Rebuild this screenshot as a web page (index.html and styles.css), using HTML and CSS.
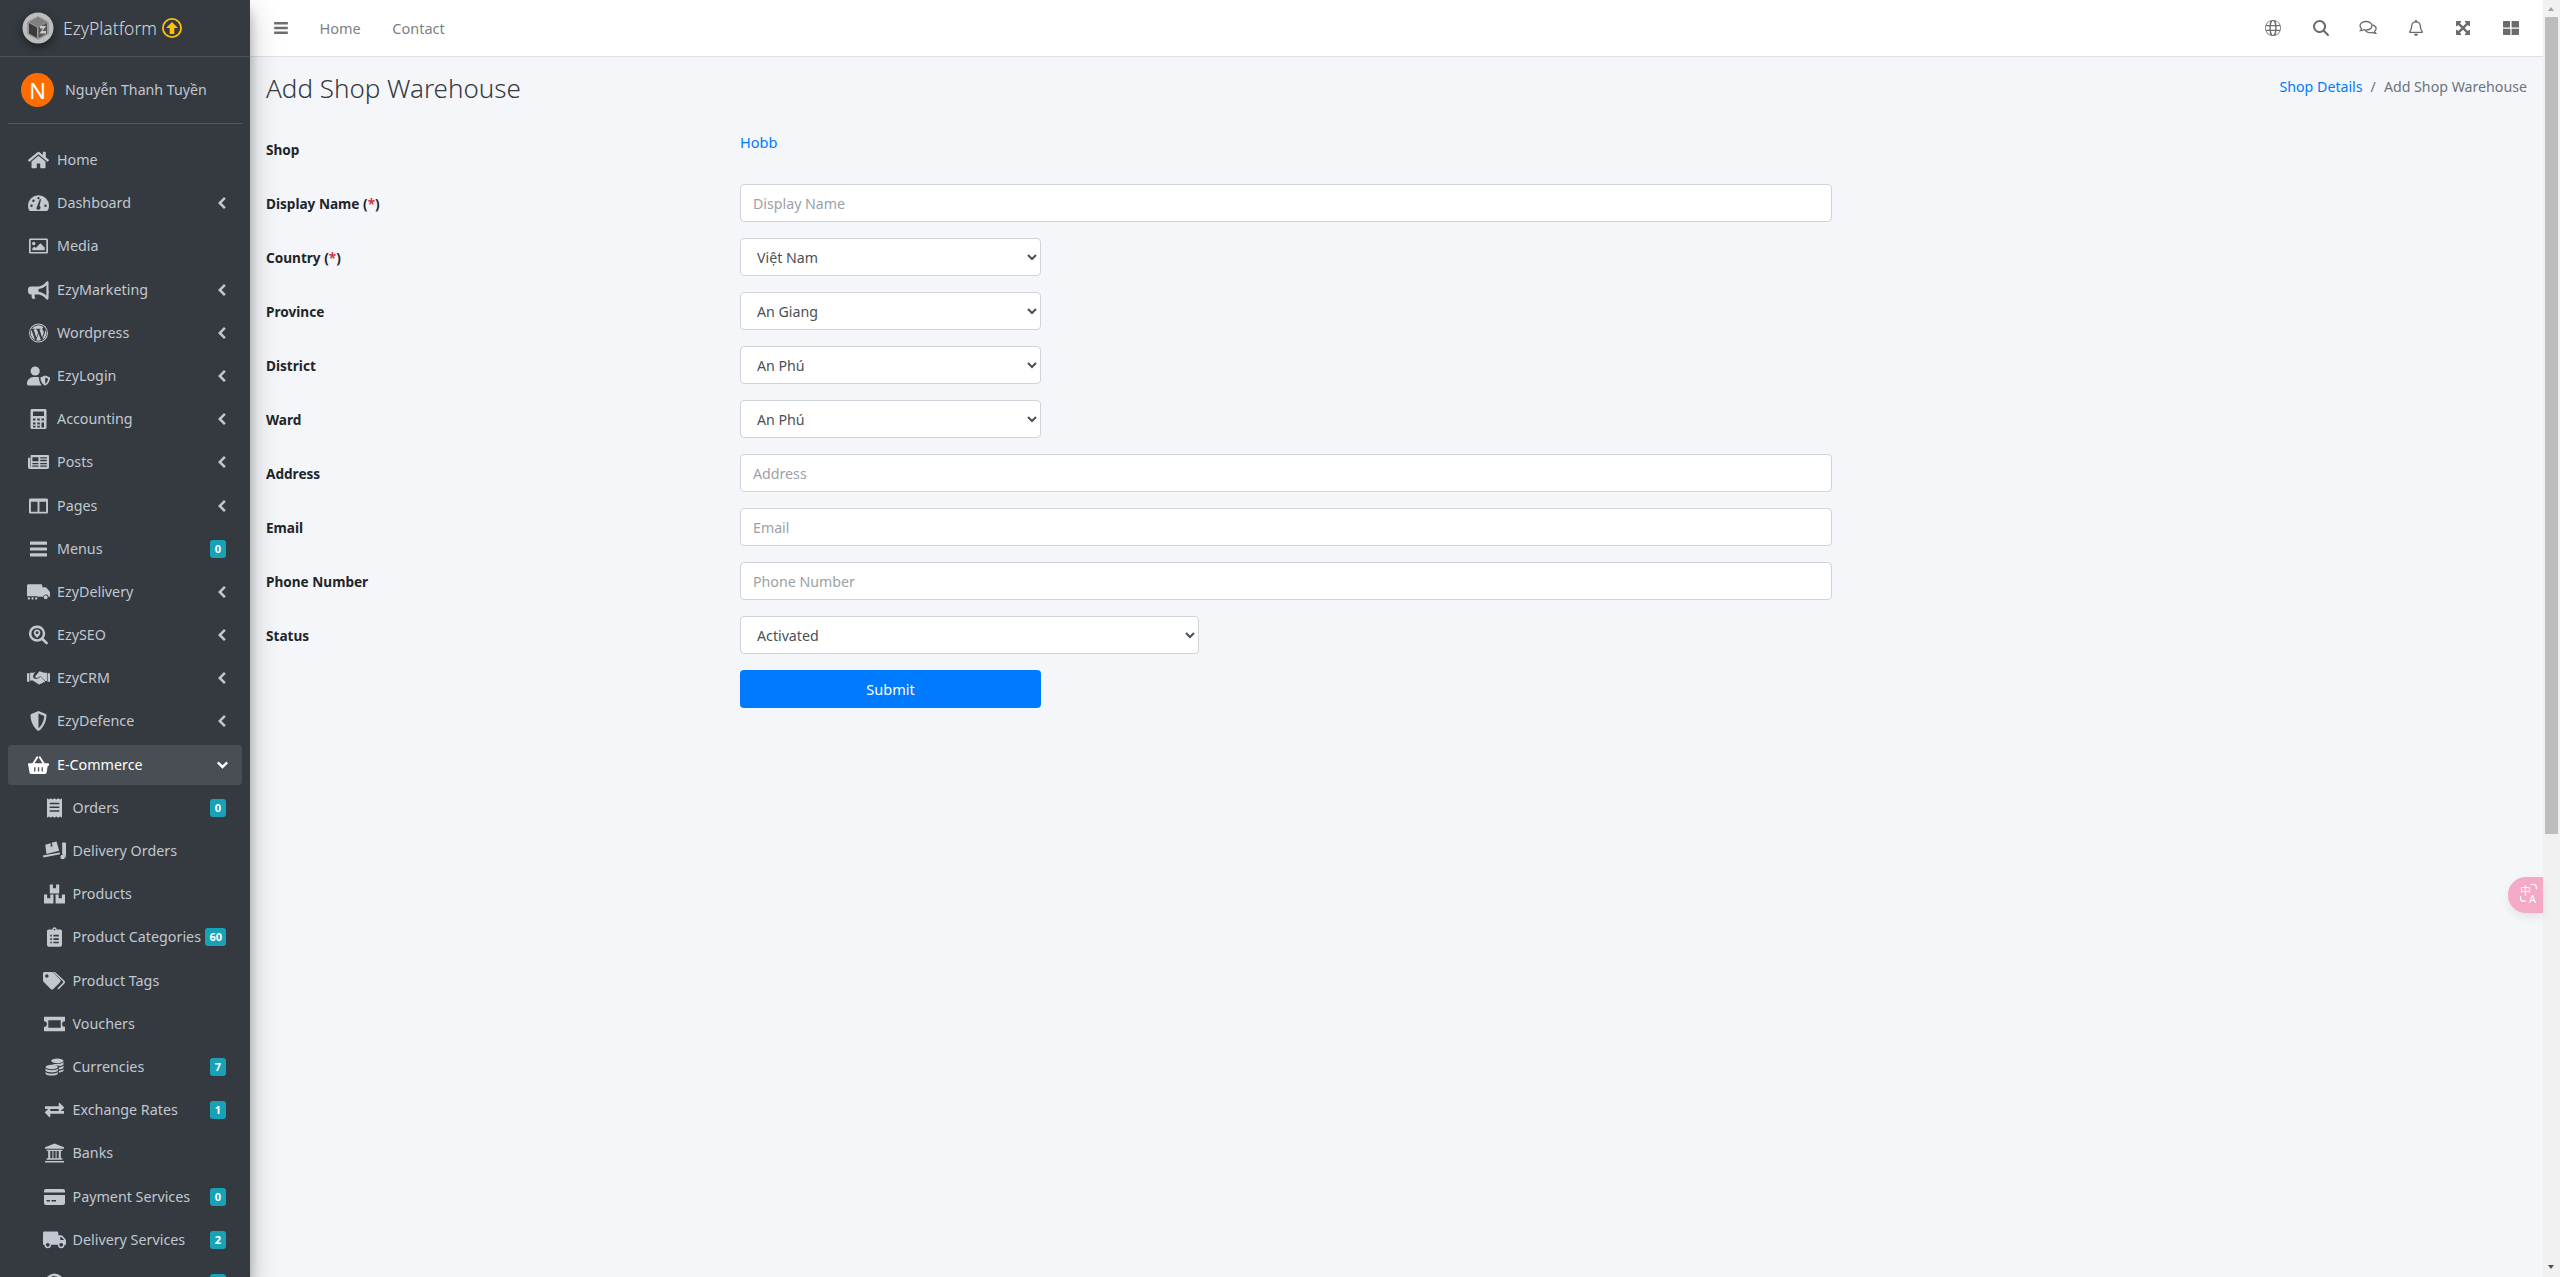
FILE: index.html
```html
<!DOCTYPE html>
<html lang="vi">
<head>
<meta charset="utf-8">
<title>Add Shop Warehouse</title>
<link rel="stylesheet" href="styles.css">
</head>
<body>
<svg class="defs" width="0" height="0">
<defs>
<symbol id="i-home" viewBox="0 0 576 512"><path d="M280.37 148.26L96 300.11V464a16 16 0 0 0 16 16l112.06-.29a16 16 0 0 0 15.92-16V368a16 16 0 0 1 16-16h64a16 16 0 0 1 16 16v95.64a16 16 0 0 0 16 16.05L464 480a16 16 0 0 0 16-16V300L295.67 148.26a12.19 12.19 0 0 0-15.3 0zM571.6 251.47L488 182.56V44.05a12 12 0 0 0-12-12h-56a12 12 0 0 0-12 12v72.61L318.47 43a48 48 0 0 0-61 0L4.34 251.47a12 12 0 0 0-1.6 16.9l25.5 31A12 12 0 0 0 45.15 301l235.22-193.74a12.19 12.19 0 0 1 15.3 0L530.9 301a12 12 0 0 0 16.9-1.6l25.5-31a12 12 0 0 0-1.7-16.93z"/></symbol>
<symbol id="i-gauge" viewBox="0 0 24 20"><path fill-rule="evenodd" d="M12 1a12 12 0 0 0-12 12c0 2 .5 4 1.500 5.500.3.400.7.500 1.100.500h18.800c.4 0 .8-.1 1.100-.5C23.500 17 24 15 24 13A12 12 0 0 0 12 1zM12 3.200a1.300 1.300 0 1 1 0 2.600 1.300 1.300 0 0 1 0-2.600zM4 14.500a1.400 1.400 0 1 1 0-2.800 1.400 1.400 0 0 1 0 2.800zM6.200 8.800a1.400 1.400 0 1 1 0-2.800 1.400 1.400 0 0 1 0 2.800zM20 14.500a1.400 1.400 0 1 1 0-2.800 1.400 1.400 0 0 1 0 2.800zM14.300 15.200a2.500 2.500 0 0 1-4.800 1l4-10.400c.2-.6 1.500-.2 1.300.4l-1.600 7c.7.400 1.100 1.100 1.100 2z"/></symbol>
<symbol id="i-image" viewBox="0 0 20 16"><path fill-rule="evenodd" d="M1.500 0h17c.8 0 1.500.7 1.500 1.500v13c0 .8-.7 1.500-1.500 1.500h-17C.7 16 0 15.300 0 14.500v-13C0 .7.700 0 1.500 0zM1.800 1.800v12.400h16.400V1.800zM5 3.500a1.800 1.800 0 1 1 0 3.600 1.800 1.800 0 0 1 0-3.600zM3.500 12.500v-2l2-2 1.500 1.500 5-5 4.500 4.500v3z"/></symbol>
<symbol id="i-bullhorn" viewBox="0 0 24 20"><path d="M22 0c-.6 0-1 .3-1.300.8C19 3 15.500 6 11 6H3C1.300 6 0 7.300 0 9v3c0 1.700 1.300 3 3 3h1.100c-.2 1.500 0 3.300.8 5h3.600c-.8-1.500-1.100-3.400-.8-5H11c4.500 0 8 3 9.700 5.200.3.500.7.800 1.300.8.800 0 1.500-.6 1.500-1.500v-6.400c.3-.3.500-.8.500-1.100 0-.500-.2-.900-.5-1.100V1.500C23.500.6 22.800 0 22 0zM21 16.500c-2-2-5-4-9-4.400V8.900c4-.4 7-2.400 9-4.400z"/></symbol>
<symbol id="i-wp" viewBox="0 0 20 20"><path fill-rule="evenodd" d="M10 0a10 10 0 1 0 0 20 10 10 0 0 0 0-20zM10 1a9 9 0 1 1 0 18 9 9 0 0 1 0-18zM1.800 10c0 3.200 1.900 6 4.600 7.400L2.500 6.700A8.200 8.200 0 0 0 1.800 10zM15.500 9.600c0-1-.4-1.700-.7-2.200-.4-.7-.8-1.200-.8-1.900 0-.7.500-1.400 1.300-1.400h.1A8.200 8.200 0 0 0 3.100 5.600h.5c.9 0 2.200-.1 2.200-.1.400 0 .5.600 0 .7l-.9.1 2.900 8.700 1.800-5.300-1.300-3.400-.8-.1c-.5 0-.4-.7 0-.7 0 0 1.400.1 2.200.1.900 0 2.200-.1 2.200-.1.500 0 .5.700 0 .7l-.9.1 2.900 8.600.8-2.700c.4-1.100.7-1.800.7-2.500zM10.100 10.600l-2.500 7.100a8.200 8.200 0 0 0 5-.1zM17.200 6c.1.300.1.600.1.900 0 .8-.2 1.800-.7 3l-2.500 7.300A8.200 8.200 0 0 0 17.200 6z"/></symbol>
<symbol id="i-usershield" viewBox="0 0 24 20"><circle cx="8.500" cy="4.800" r="4.800"/><path d="M0 18c0-3.800 3-7 6.800-7h3.500c.8 0 1.500.1 2.200.4-.1 3 .7 6 2.800 8.600H2c-1.100 0-2-.9-2-2z"/><path d="M19 9.500l4.600 1.800c.3.100.4.400.4.600 0 3-1.300 6.500-4.700 8-.2.100-.4.100-.6 0-3.400-1.500-4.700-5-4.700-8 0-.2.200-.5.400-.6zM19 11.600v6.500c2-1 2.900-3.500 3-5.200z" fill-rule="evenodd"/></symbol>
<symbol id="i-calc" viewBox="0 0 16 20"><path fill-rule="evenodd" d="M1.500 0h13c.8 0 1.500.7 1.500 1.500v17c0 .8-.7 1.500-1.500 1.500h-13C.7 20 0 19.300 0 18.500v-17C0 .7.700 0 1.500 0zM2.500 2.500v4.500h11V2.500zM2.500 9.500v2h2.500v-2zM6.800 9.500v2h2.500v-2zM11 9.500v2h2.500v-2zM2.500 13.500v2h2.500v-2zM6.800 13.500v2h2.500v-2zM11 13.500v5h2.500v-5zM2.500 16.800v1.700h2.500v-1.700zM6.800 16.800v1.700h2.500v-1.700z"/></symbol>
<symbol id="i-news" viewBox="0 0 24 16"><path fill-rule="evenodd" d="M3 0h20c.6 0 1 .4 1 1v13c0 1.100-.9 2-2 2H2c-1.100 0-2-.9-2-2V3h2.500v10.500c0 .3.500.3.500 0zM5 2.500v4.500h7V2.500zM14 2.500v1.500h7.500V2.500zM14 5.500V7h7.500V5.500zM5 9v1.500h7V9zM14 9v1.500h7.500V9zM5 12v1.500h7V12zM14 12v1.500h7.500V12z"/></symbol>
<symbol id="i-columns" viewBox="0 0 20 16"><path fill-rule="evenodd" d="M1.500 0h17c.8 0 1.500.7 1.500 1.500v13c0 .8-.7 1.500-1.500 1.500h-17C.7 16 0 15.300 0 14.500v-13C0 .7.700 0 1.500 0zM2 3.500v10.500h7V3.500zM11 3.500v10.500h7V3.500z"/></symbol>
<symbol id="i-bars" viewBox="0 0 16 14"><path d="M.5 0h15c.3 0 .5.200.5.500v2c0 .3-.2.500-.5.500H.5C.2 3 0 2.800 0 2.500v-2C0 .2.200 0 .5 0zM.5 5.500h15c.3 0 .5.200.5.500v2c0 .3-.2.500-.5.500H.5C.2 8.500 0 8.300 0 8V6c0-.3.200-.5.500-.5zM.5 11h15c.3 0 .5.200.5.500v2c0 .3-.2.500-.5.500H.5c-.3 0-.5-.2-.5-.500v-2c0-.3.200-.5.500-.5z"/></symbol>
<symbol id="i-truck" viewBox="0 0 24 18"><path fill-rule="evenodd" d="M1.500 0h13C15.300 0 16 .7 16 1.500V4h3c.5 0 1 .2 1.300.6l3.100 3.700c.4.400.6.900.6 1.400V14h-1.500a3.500 3.500 0 0 1-7 0H8.500a3.500 3.500 0 0 1-7 0H0V1.500C0 .7.700 0 1.500 0zM18 6v3h4l-2.500-3zM5 12a2 2 0 1 1 0 4 2 2 0 0 1 0-4zM19 12a2 2 0 1 1 0 4 2 2 0 0 1 0-4z"/></symbol>
<symbol id="i-truckdots" viewBox="0 0 24 16"><path d="M1.500 0h13C15.300 0 16 .7 16 1.500V3h3c.5 0 1 .2 1.300.6l3.100 3.700c.4.400.6.900.6 1.400V13h-1.500a2.800 2.800 0 0 0-5.500 0h-6v-.5H0V1.500C0 .7.700 0 1.500 0z"/><circle cx="19.500" cy="13.500" r="2"/><circle cx="2" cy="14.800" r="1.200"/><circle cx="5.800" cy="14.800" r="1.200"/><circle cx="9.600" cy="14.800" r="1.200"/></symbol>
<symbol id="i-searchloc" viewBox="0 0 20 20"><path fill-rule="evenodd" d="M8.500 0a8.500 8.500 0 0 1 6.900 13.400l4.200 4.200c.5.500.5 1.200 0 1.700l-.3.300c-.5.500-1.200.5-1.700 0l-4.200-4.200A8.500 8.500 0 1 1 8.500 0zM8.500 2.500a6 6 0 1 0 0 12 6 6 0 0 0 0-12zM8.500 4.200c2 0 3.500 1.500 3.500 3.300 0 2-2.500 4.600-3.500 5.500C7.500 12.100 5 9.500 5 7.500c0-1.800 1.500-3.300 3.500-3.300zM8.500 6a1.500 1.500 0 1 0 0 3 1.500 1.500 0 0 0 0-3z"/></symbol>
<symbol id="i-hands" viewBox="0 0 24 14"><path d="M0 2h2.500v9H0zM21.500 2H24v9h-2.500z"/><path d="M13 0l5 1.500h2.800V10h-1.500L14 4.800l-1 1c-1.300 1.300-3 1.500-4 .7-.6-.5-.6-1.300 0-1.900zM3.200 1.500H6.500L8.500.6 8 1.200 6.800 3.800c-.9 1.400-.5 2.600.6 3.500 1.500 1 3.500.9 5.700-.8l1-1 4.500 4.500c.3.400.3 1 0 1.300-.3.300-.7.300-1 0l-.5-.4c.2.400 0 .9-.3 1.100-.4.300-.8.200-1.100 0 0 .5-.3.800-.7 1-.4.100-.7 0-1-.1-.2.500-.7.800-1.200.8-.6 0-1.100-.3-1.500-.7L6 9.500H3.200z"/></symbol>
<symbol id="i-shield" viewBox="0 0 16 20"><path fill-rule="evenodd" d="M8 0l7.300 3c.4.200.7.600.7 1 0 5-2 11.800-7.500 15.800-.3.200-.7.200-1 0C2 15.800 0 9 0 4c0-.4.300-.8.700-1zM8 2.500V17.300c3.900-3.100 5.600-8.500 5.700-12.200z"/></symbol>
<symbol id="i-basket" viewBox="0 0 24 20"><path fill-rule="evenodd" d="M13 .2c.5-.2 1-.1 1.300.4L19 8h4c.6 0 1 .4 1 1v1c0 .6-.4 1-1 1h-.5l-1.200 7.700c-.2 1-1 1.700-2 1.700H3.700c-1 0-1.800-.7-2-1.700L.5 11H1c-.6 0-1-.4-1-1V9c0-.6.400-1 1-1h4L9.700.6c.3-.5 1-.7 1.500-.4.500.3.600 1 .3 1.500L7.500 8h9l-4-6.300c-.3-.5-.1-1.200.500-1.500zM7 12.500v5h1.500v-5zM11.300 12.500v5h1.500v-5zM15.500 12.500v5H17v-5z"/></symbol>
<symbol id="i-receipt" viewBox="0 0 14 18"><path fill-rule="evenodd" d="M0 0l1.700 1L3.500 0l1.700 1L7 0l1.800 1L10.500 0l1.800 1L14 0v18l-1.700-1-1.800 1-1.700-1L7 18l-1.800-1-1.700 1-1.800-1L0 18zM2.500 4v1.500h9V4zM2.500 7.500V9h9V7.500zM2.500 11v1.500h9V11z"/></symbol>
<symbol id="i-dolly" viewBox="0 0 24 18"><path d="M20 0h3c.6 0 1 .4 1 1v15h-.5c0-1.500-1.100-2.700-2.500-2.900L20 12V0z"/><circle cx="20.500" cy="15.300" r="2.400"/><path d="M2.400 2.500L8 1v3.500l2-.5-.9-3.600 5-1.300 2.800 9.700L3.600 12zM0 13.800l17.500-3.300.3 1.900L.5 15.800z"/></symbol>
<symbol id="i-cubes" viewBox="0 0 20 18"><path fill-rule="evenodd" d="M5.500 0h9v8.500h-9zM8.500 0v3.500h3V0zM0 9.500h9V18H0zM3 9.500V13h3V9.500zM11 9.500h9V18h-9zM14 9.500V13h3V9.500z"/></symbol>
<symbol id="i-clip" viewBox="0 0 14 18"><path fill-rule="evenodd" d="M7 0a2 2 0 0 1 2 2h3.500c.8 0 1.500.7 1.500 1.500V16.500c0 .8-.7 1.500-1.500 1.500h-11C.7 18 0 17.300 0 16.500v-13C0 2.700.7 2 1.500 2H5a2 2 0 0 1 2-2zM7 1.200a.8.800 0 1 0 0 1.600.8.800 0 0 0 0-1.600zM3 7v1.500h1.500V7zM6 7v1.500h5V7zM3 10.200v1.500h1.500v-1.500zM6 10.200v1.500h5v-1.500zM3 13.400v1.500h1.500v-1.500zM6 13.400v1.500h5v-1.500z"/></symbol>
<symbol id="i-tags" viewBox="0 0 24 19"><path fill-rule="evenodd" d="M0 1.500C0 .7.700 0 1.500 0H9c.6 0 1 .2 1.400.6l7.400 7.400c.8.800.8 2 0 2.800l-7 7c-.8.800-2 .8-2.800 0L.6 10.400C.2 10 0 9.600 0 9zM4 2.500a1.800 1.800 0 1 0 0 3.600 1.800 1.800 0 0 0 0-3.600z"/><path d="M12.500 0l9.900 9.300c.8.800.8 2 0 2.800l-6.200 6.300-1.200-1.100 6-6.200c.3-.3.300-.8 0-1.100L10.300 0z"/></symbol>
<symbol id="i-ticket" viewBox="0 0 22 15"><path fill-rule="evenodd" d="M0 0h22v4.500a3 3 0 0 0 0 6V15H0v-4.500a3 3 0 0 0 0-6zM4.500 3.500v8h13v-8z"/></symbol>
<symbol id="i-coins" viewBox="0 0 20 18"><ellipse cx="13" cy="2.500" rx="6.500" ry="2.500"/><path d="M6.500 7.500c1-.8 2.500-1.500 4-1.700 3 .2 8-.2 9-2v2c0 1-1.800 1.800-4 2.100-1.500-.5-5.500-.8-9-.4z"/><ellipse cx="7" cy="9" rx="6.500" ry="2.300"/><path d="M.5 10.700C1.500 12 4 12.500 7 12.500s5.500-.5 6.500-1.800v1.800c0 1.200-3 2.200-6.500 2.200S.5 13.700.5 12.500z"/><path d="M.5 14.200C1.500 15.400 4 16 7 16s5.500-.6 6.500-1.800v1.600C13.500 17 10.500 18 7 18S.5 17 .5 15.800zM14.500 9.500c2-.3 4-.8 5-2v2c0 .8-1.900 1.700-5 2.100zM14.500 13c2-.3 4-.8 5-2v1.800c0 .9-2 1.800-5 2.100z"/></symbol>
<symbol id="i-exch" viewBox="0 0 18 14"><path d="M0 3.500h13V.5c0-.4.500-.6.800-.3L18 4.300c.2.200.2.500 0 .7l-4.200 4c-.3.300-.8.100-.8-.3V6H0zM18 10.500H5v3c0 .4-.5.600-.8.300L0 9.700c-.2-.2-.2-.5 0-.7l4.200-4c.3-.3.800-.1.800.3V8h13z"/></symbol>
<symbol id="i-bank" viewBox="0 0 18 18"><path fill-rule="evenodd" d="M9 0l9 3.500V5H0V3.500zM1.500 6h15v1.200H15v6.800h1.500v1.500h-15V14H3V7.200H1.500zM5 7.200V14h2V7.200zM8 7.200V14h2V7.200zM11 7.200V14h2V7.200zM0 16.500h18V18H0z"/></symbol>
<symbol id="i-card" viewBox="0 0 21 16"><path fill-rule="evenodd" d="M2 0h17c1.100 0 2 .9 2 2v1.500H0V2C0 .9.900 0 2 0zM0 6h21v8c0 1.100-.9 2-2 2H2c-1.100 0-2-.9-2-2zM2.500 11v1.500H6V11zM7.500 11v1.500H12V11z"/></symbol>
<symbol id="i-globeq" viewBox="0 0 20 20"><path fill-rule="evenodd" d="M10 0a10 10 0 1 1 0 20 10 10 0 0 1 0-20zM10 2.500c-1.500 0-3 .5-4 1.500l3 2-1 3-3 1 1.500 3 3 1 .5 4c3.800-.4 7-3.600 7-7.500 0-4.200-3.300-7.500-7-7.500z"/></symbol>
<symbol id="i-globe" viewBox="0 0 16 16"><path fill-rule="evenodd" d="M8 0a8 8 0 1 1 0 16A8 8 0 0 1 8 0zM5.300 1.100A7 7 0 0 0 1.400 5h3.200c.1-1.500.4-2.900.7-3.900zM10.700 1.100c.3 1 .6 2.400.7 3.900h3.200a7 7 0 0 0-3.900-3.900zM6 5h4c-.2-2.200-1.100-4-2-4S6.200 2.800 6 5zM1 6.300a7 7 0 0 0 0 3.400h3.500a20 20 0 0 1 0-3.400zM5.900 6.300a14 14 0 0 0 0 3.400h4.200a14 14 0 0 0 0-3.400zM11.500 6.300a20 20 0 0 1 0 3.400H15a7 7 0 0 0 0-3.400zM1.400 11a7 7 0 0 0 3.900 3.900c-.3-1-.6-2.400-.7-3.900zM6 11c.2 2.200 1.100 4 2 4s1.800-1.800 2-4zM11.400 11c-.1 1.500-.4 2.900-.7 3.900a7 7 0 0 0 3.900-3.900z"/></symbol>
<symbol id="i-search" viewBox="0 0 16 16"><path fill-rule="evenodd" d="M6.500 0a6.500 6.500 0 0 1 5.300 10.300l3.900 3.900c.4.400.4 1 0 1.400l-.1.100c-.4.400-1 .4-1.400 0l-3.900-3.900A6.500 6.500 0 1 1 6.500 0zM6.500 2a4.500 4.500 0 1 0 0 9 4.500 4.500 0 0 0 0-9z"/></symbol>
<symbol id="i-comments" viewBox="0 0 18 15"><path fill="none" stroke="currentColor" stroke-width="1.300" d="M7 1c3.300 0 6 1.900 6 4.300S10.300 9.600 7 9.600c-.9 0-1.700-.1-2.400-.4-.9.600-2 1-3.300 1 .7-.7 1.100-1.500 1.200-2.200C1.500 7.200 1 6.300 1 5.300 1 2.900 3.700 1 7 1zM13.700 4.300c2 .6 3.400 2 3.400 3.600 0 1.100-.6 2-1.500 2.800.1.800.5 1.500 1.200 2.200-1.300 0-2.400-.4-3.300-1-.7.200-1.500.4-2.300.4-2 0-3.800-.9-4.700-2.200"/></symbol>
<symbol id="i-bell" viewBox="0 0 14 16"><path fill="none" stroke="currentColor" stroke-width="1.300" d="M7 1.800c2.400 0 4.300 1.900 4.300 4.300 0 3.800 1.700 4.900 2 5.500.1.300-.1.700-.5.700H1.200c-.4 0-.6-.4-.5-.7.300-.6 2-1.700 2-5.500C2.700 3.700 4.600 1.800 7 1.800z"/><path d="M6 .9a1 1 0 0 1 2 0v1.300H6zM5 13.800h4c0 1.200-.9 2.200-2 2.200S5 15 5 13.800z"/></symbol>
<symbol id="i-expand" viewBox="0 0 14 14"><path d="M0 .7C0 .3.300 0 .7 0h3.800c.6 0 .9.700.5 1.100L3.900 2.200 7 5.300l3.100-3.100L9 1.100C8.600.7 8.900 0 9.500 0h3.800c.4 0 .7.300.7.700v3.800c0 .6-.7.900-1.100.5l-1.100-1.100L8.700 7l3.100 3.100 1.100-1.100c.4-.4 1.100-.1 1.100.5v3.800c0 .4-.3.700-.7.700H9.500c-.6 0-.9-.7-.5-1.100l1.100-1.100L7 8.700l-3.100 3.100L5 12.900c.4.400.1 1.100-.5 1.100H.7c-.4 0-.7-.3-.7-.7V9.500C0 8.900.7 8.600 1.100 9l1.100 1.100L5.300 7 2.200 3.900 1.100 5C.7 5.400 0 5.100 0 4.500z"/></symbol>
<symbol id="i-grid" viewBox="0 0 16 14"><path d="M0 1c0-.6.400-1 1-1h6v6.400H0zM8.600 0H15c.6 0 1 .4 1 1v5.400H8.600zM0 7.800h7.400V14H1c-.6 0-1-.4-1-1zM8.600 7.800H16V13c0 .6-.4 1-1 1H8.600z"/></symbol>
<symbol id="i-left" viewBox="0 0 8 12"><path d="M6 0l1.800 1.800L3.600 6l4.200 4.200L6 12 0 6z"/></symbol>
<symbol id="i-down" viewBox="0 0 12 8"><path d="M0 2l1.800-1.800L6 4.400 10.200.2 12 2 6 8z"/></symbol>
<symbol id="i-up" viewBox="0 0 20 20"><path fill-rule="evenodd" d="M10 0a10 10 0 1 1 0 20 10 10 0 0 1 0-20zM10 1.800a8.200 8.200 0 1 0 0 16.400 8.200 8.200 0 0 0 0-16.400zM10 4l6 6h-3.700v6H7.700v-6H4z"/></symbol>
<symbol id="i-logo" viewBox="0 0 32 32"><circle cx="16" cy="16" r="15.500" fill="#bdbdbd"/><path d="M16 4l11 6v12l-11 6-11-6V10z" fill="#9a9a9a"/><path d="M7 11l8 4.500V26l-8-4.500z" fill="#3b3b3b"/><path d="M16 5l9 5-9 5-9-5z" fill="#808080"/><path d="M16.500 15.500l8.500-4.700v10.700L16.500 26z" fill="#555"/><path d="M18 14h6l-3.500 5h3.500v2.500h-6.500l3.500-5h-3z" fill="#c9c9c9"/></symbol>
<symbol id="i-brackets" viewBox="0 0 26 26"><path fill="none" stroke="currentColor" stroke-width="1.500" d="M15 2h4c2 0 3.500 1.500 3.500 3.500V8M2 17v3c0 2 1.500 3.500 3.500 3.500H9"/></symbol>
</defs>
</svg>

<div class="app">
  <aside class="sidebar">
    <a class="brand"><svg class="brand-logo"><use href="#i-logo"/></svg><span class="brand-name">EzyPlatform</span><svg class="brand-up"><use href="#i-up"/></svg></a>
    <div class="user"><span class="avatar">N</span><span class="user-name">Nguyễn Thanh Tuyền</span></div>
    <ul class="nav">
      <li class="row"><svg class="ic w21"><use href="#i-home"/></svg><span class="lbl">Home</span></li>
      <li class="row"><svg class="ic w21"><use href="#i-gauge"/></svg><span class="lbl">Dashboard</span><svg class="chev"><use href="#i-left"/></svg></li>
      <li class="row"><svg class="ic w18"><use href="#i-image"/></svg><span class="lbl">Media</span></li>
      <li class="row"><svg class="ic w21"><use href="#i-bullhorn"/></svg><span class="lbl">EzyMarketing</span><svg class="chev"><use href="#i-left"/></svg></li>
      <li class="row"><svg class="ic w18"><use href="#i-wp"/></svg><span class="lbl">Wordpress</span><svg class="chev"><use href="#i-left"/></svg></li>
      <li class="row"><svg class="ic w23"><use href="#i-usershield"/></svg><span class="lbl">EzyLogin</span><svg class="chev"><use href="#i-left"/></svg></li>
      <li class="row"><svg class="ic w16"><use href="#i-calc"/></svg><span class="lbl">Accounting</span><svg class="chev"><use href="#i-left"/></svg></li>
      <li class="row"><svg class="ic w21"><use href="#i-news"/></svg><span class="lbl">Posts</span><svg class="chev"><use href="#i-left"/></svg></li>
      <li class="row"><svg class="ic w18"><use href="#i-columns"/></svg><span class="lbl">Pages</span><svg class="chev"><use href="#i-left"/></svg></li>
      <li class="row"><svg class="ic w16"><use href="#i-bars"/></svg><span class="lbl">Menus</span><span class="badge">0</span></li>
      <li class="row"><svg class="ic w23"><use href="#i-truckdots"/></svg><span class="lbl">EzyDelivery</span><svg class="chev"><use href="#i-left"/></svg></li>
      <li class="row"><svg class="ic w18"><use href="#i-searchloc"/></svg><span class="lbl">EzySEO</span><svg class="chev"><use href="#i-left"/></svg></li>
      <li class="row"><svg class="ic w23"><use href="#i-hands"/></svg><span class="lbl">EzyCRM</span><svg class="chev"><use href="#i-left"/></svg></li>
      <li class="row"><svg class="ic w18"><use href="#i-shield"/></svg><span class="lbl">EzyDefence</span><svg class="chev"><use href="#i-left"/></svg></li>
      <li class="row active"><svg class="ic w21"><use href="#i-basket"/></svg><span class="lbl">E-Commerce</span><svg class="chev-down"><use href="#i-down"/></svg></li>
      <li class="row sub"><svg class="ic w15"><use href="#i-receipt"/></svg><span class="lbl">Orders</span><span class="badge">0</span></li>
      <li class="row sub"><svg class="ic w23"><use href="#i-dolly"/></svg><span class="lbl">Delivery Orders</span></li>
      <li class="row sub"><svg class="ic w21"><use href="#i-cubes"/></svg><span class="lbl">Products</span></li>
      <li class="row sub"><svg class="ic w15"><use href="#i-clip"/></svg><span class="lbl">Product Categories</span><span class="badge">60</span></li>
      <li class="row sub"><svg class="ic w23"><use href="#i-tags"/></svg><span class="lbl">Product Tags</span></li>
      <li class="row sub"><svg class="ic w21"><use href="#i-ticket"/></svg><span class="lbl">Vouchers</span></li>
      <li class="row sub"><svg class="ic w19"><use href="#i-coins"/></svg><span class="lbl">Currencies</span><span class="badge">7</span></li>
      <li class="row sub"><svg class="ic w18"><use href="#i-exch"/></svg><span class="lbl">Exchange Rates</span><span class="badge">1</span></li>
      <li class="row sub"><svg class="ic w18"><use href="#i-bank"/></svg><span class="lbl">Banks</span></li>
      <li class="row sub"><svg class="ic w21"><use href="#i-card"/></svg><span class="lbl">Payment Services</span><span class="badge">0</span></li>
      <li class="row sub"><svg class="ic w23"><use href="#i-truck"/></svg><span class="lbl">Delivery Services</span><span class="badge">2</span></li>
      <li class="row sub"><svg class="ic w18"><use href="#i-globeq"/></svg><span class="lbl"></span><span class="badge"></span></li>
    </ul>
  </aside>

  <div class="main">
    <header class="topbar">
      <svg class="top-bars"><use href="#i-bars"/></svg>
      <a class="top-link">Home</a>
      <a class="top-link">Contact</a>
      <div class="top-icons">
        <svg class="ti"><use href="#i-globe"/></svg>
        <svg class="ti"><use href="#i-search"/></svg>
        <svg class="ti ti-wide"><use href="#i-comments"/></svg>
        <svg class="ti"><use href="#i-bell"/></svg>
        <svg class="ti ti-small"><use href="#i-expand"/></svg>
        <svg class="ti"><use href="#i-grid"/></svg>
      </div>
    </header>
    <main class="content">
      <div class="page-head">
        <h1>Add Shop Warehouse</h1>
        <div class="crumbs"><a class="link">Shop Details</a><span class="sep">/</span><span>Add Shop Warehouse</span></div>
      </div>
      <form class="form">
        <div class="f-row"><label>Shop</label><a class="link shop-link">Hobb</a></div>
        <div class="f-row"><label>Display Name (<i>*</i>)</label><input class="ctl" placeholder="Display Name"></div>
        <div class="f-row"><label>Country (<i>*</i>)</label><select class="ctl sel-s"><option>Việt Nam</option></select></div>
        <div class="f-row"><label>Province</label><select class="ctl sel-s"><option>An Giang</option></select></div>
        <div class="f-row"><label>District</label><select class="ctl sel-s"><option>An Phú</option></select></div>
        <div class="f-row"><label>Ward</label><select class="ctl sel-s"><option>An Phú</option></select></div>
        <div class="f-row"><label>Address</label><input class="ctl" placeholder="Address"></div>
        <div class="f-row"><label>Email</label><input class="ctl" placeholder="Email"></div>
        <div class="f-row"><label>Phone Number</label><input class="ctl" placeholder="Phone Number"></div>
        <div class="f-row"><label>Status</label><select class="ctl sel-m"><option>Activated</option></select></div>
        <div class="f-row"><span></span><button class="submit" type="button">Submit</button></div>
      </form>
      <div class="translate"><span class="tr-a">中</span><span class="tr-b">A</span><svg class="tr-br"><use href="#i-brackets"/></svg></div>
    </main>
  </div>

  <div class="scrollbar"><span class="sb-up"></span><span class="sb-thumb"></span><span class="sb-down"></span></div>
</div>
</body>
</html>
```

FILE: styles.css
```css
* { box-sizing: border-box; }
html, body { margin: 0; height: 100%; overflow: hidden; }
body { font: 14.5px/24px "Noto Sans", sans-serif; color: #212529; background: #f4f6f9; }
.defs { position: absolute; }
svg { fill: currentColor; display: block; flex: none; }
a { text-decoration: none; }

.app { display: flex; height: 1277px; }

.sidebar { width: 250px; flex: none; background: #343a40; color: #c2c7d0; overflow: hidden; box-shadow: 0 14px 28px rgba(0,0,0,.25), 0 10px 10px rgba(0,0,0,.22); position: relative; z-index: 2; }
.brand { height: 57px; display: flex; align-items: center; padding-left: 22px; border-bottom: 1px solid #4b545c; }
.brand-logo { width: 32px; height: 32px; filter: drop-shadow(0 3px 4px rgba(0,0,0,.5)); }
.brand-name { margin-left: 9px; font-size: 17.5px; font-weight: 300; color: rgba(255,255,255,.8); }
.brand-up { width: 20px; height: 20px; color: #ffc107; margin-left: 5px; }
.user { height: 67px; margin: 0 8px; display: flex; align-items: center; padding-left: 13px; border-bottom: 1px solid #4f5962; }
.avatar { width: 33px; height: 34px; border-radius: 50%; background: #ff6d00; color: #fff; font-size: 22px; display: flex; align-items: center; justify-content: center; }
.user-name { margin-left: 11px; font-size: 14.2px; }

.nav { list-style: none; margin: 0; padding: 16px 8px 0; font-size: 14.3px; }
.row { height: 40px; margin-bottom: 3.2px; padding: 0 16px 0 18px; border-radius: 4px; display: flex; align-items: center; position: relative; white-space: nowrap; }
.row.sub { padding-left: 34px; }
.row.active { background: rgba(255,255,255,.1); color: #fff; }
.row .ic { width: 29px; height: 20px; margin-left: -2px; margin-right: 4px; color: inherit; }
.w15 { padding: 0 7px; } .w16 { padding: 0 6px; } .w18 { padding: 0 5px; } .w19 { padding: 0 5px; } .w21 { padding: 0 4px; } .w23 { padding: 0 3px; }
.row.sub .ic { margin-right: 3.5px; }
.lbl { flex: 1; min-width: 0; }
.chev { width: 8px; height: 12px; }
.chev-down { width: 11px; height: 8px; margin-right: -2px; }
.badge { background: #17a2b8; color: #fff; font-size: 11px; font-weight: 700; line-height: 18px; height: 18px; min-width: 16px; padding: 0 4px; border-radius: 3px; text-align: center; }

.main { flex: 1; min-width: 0; display: flex; flex-direction: column; }
.topbar { height: 57px; flex: none; background: #fff; border-bottom: 1px solid #dee2e6; display: flex; align-items: center; padding-left: 24px; color: rgba(0,0,0,.5); }
.top-bars { width: 14px; height: 12px; color: #6e6e6e; margin-right: 31.500px; }
.top-link { margin-right: 31.500px; color: #7f7f7f; }
.top-icons { margin-left: auto; display: flex; align-items: center; gap: 31.600px; padding-right: 24px; color: #6b6b6b; }
.ti { width: 16px; height: 16px; }
.ti-wide { width: 18px; margin: 0 -1px; }
.ti-small { width: 14px; height: 14px; margin: 0 1px; }

.content { flex: 1; padding: 0 16px; position: relative; }
.page-head { display: flex; justify-content: space-between; height: 73px; }
h1 { margin: 0; font-size: 26px; font-weight: 300; line-height: 40px; padding-top: 11px; color: #343a40; }
.crumbs { padding-top: 18px; color: #6c757d; display: flex; font-size: 14.2px; }
.sep { margin: 0 8px; }
.link { color: #007bff; }

.form { width: 1566px; }
.f-row { display: grid; grid-template-columns: 474px 1092px; align-items: center; height: 38px; margin-bottom: 16px; }
label { font-weight: 700; font-size: 13.6px; color: #212529; padding-top: 2px; }
label i { font-style: normal; color: #dc3545; }
.shop-link { align-self: start; line-height: 24px; margin-top: 0; }
.ctl { height: 38px; border: 1px solid #ced4da; border-radius: 4px; background: #fff; font: inherit; font-size: 14.2px; color: #495057; padding: 0 12px; outline: none; }
input.ctl { width: 1092px; }
input.ctl::placeholder { color: #9ba1a7; opacity: 1; }
.sel-s { width: 301px; }
.sel-m { width: 459px; }
.submit { width: 301px; height: 38px; border: 0; border-radius: 4px; background: #007bff; color: #fff; font: inherit; }

.translate { position: absolute; right: 0; top: 820px; width: 35px; height: 36px; background: #f4a9c6; border-radius: 18px 0 0 18px; color: #fff; box-shadow: 0 4px 10px rgba(0,0,0,.08); }
.tr-a { position: absolute; left: 12px; top: 6px; font: 11px/14px "Noto Sans CJK SC", sans-serif; }
.tr-b { position: absolute; left: 21px; top: 15px; font-size: 11px; line-height: 14px; }
.tr-br { position: absolute; left: 11px; top: 6px; width: 20px; height: 20px; }

.scrollbar { width: 17px; flex: none; background: #f1f1f1; display: flex; flex-direction: column; align-items: center; }
.sb-up { flex: none; height: 17px; width: 7px; position: relative; }
.sb-up::before { content: ""; position: absolute; left: 0; top: 7px; border: 4px solid transparent; border-top: 0; border-bottom-color: #a3a3a3; border-left-width: 3.500px; border-right-width: 3.500px; }
.sb-thumb { width: 13px; height: 817px; background: #bdbdbd; }
.sb-down { margin-top: auto; flex: none; height: 17px; width: 7px; position: relative; }
.sb-down::before { content: ""; position: absolute; left: 0; top: 5px; border: 4px solid transparent; border-bottom: 0; border-top-color: #505050; border-left-width: 3.500px; border-right-width: 3.500px; }
```
